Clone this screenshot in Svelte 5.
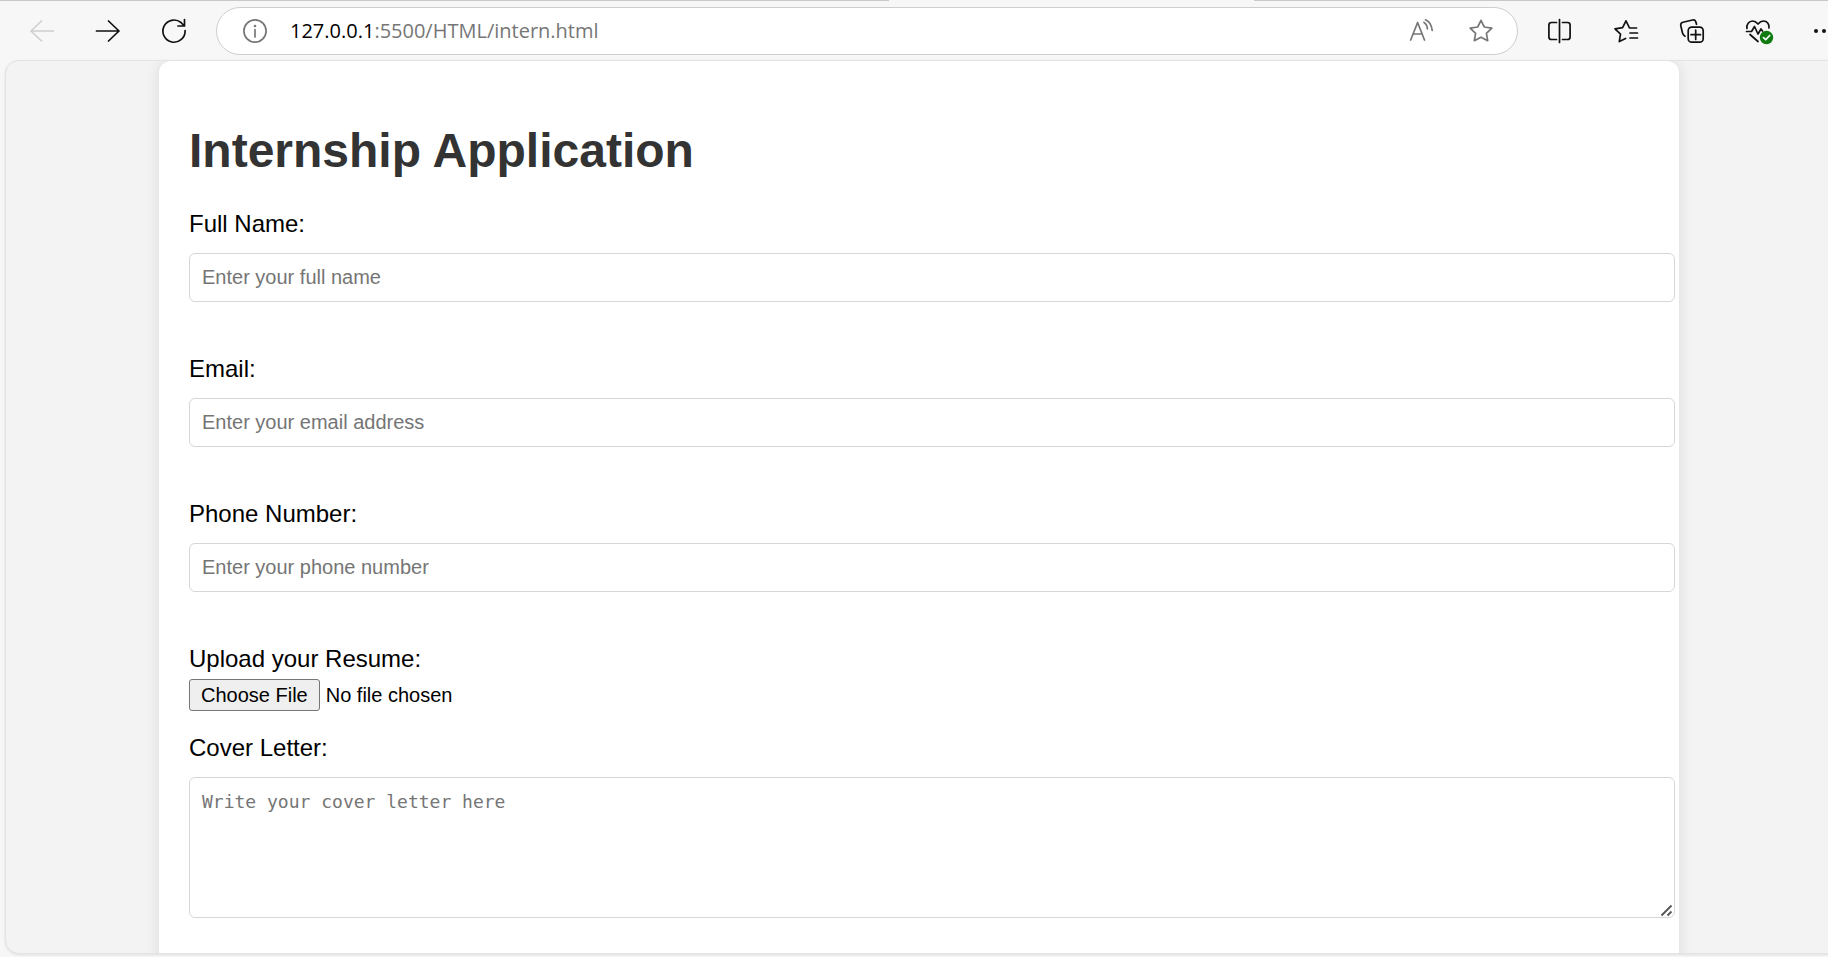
<script>
  const fields = [
    { id: 'name', type: 'text', label: 'Full Name:', hint: 'Enter your full name' },
    { id: 'email', type: 'email', label: 'Email:', hint: 'Enter your email address' },
    { id: 'phone', type: 'tel', label: 'Phone Number:', hint: 'Enter your phone number' }
  ];
</script>

<div class="browser">
  <div class="tabs"><span class="left"></span><span class="active"></span><span class="right"></span></div>
  <header class="toolbar">
    <nav class="group">
      <button class="icon faded" aria-label="Back" disabled>
        <svg viewBox="0 0 24 24"><path d="M23.5 12H1M11.5 2 1 12l10.500 10" /></svg>
      </button>
      <button class="icon" aria-label="Forward">
        <svg viewBox="0 0 24 24"><path d="M.5 12H23M12.500 2 23 12 12.500 22" /></svg>
      </button>
      <button class="icon" aria-label="Refresh">
        <svg viewBox="0 0 24 24"><path d="M23.100 11.500A11.100 11.100 0 1 1 19 3.500L22 6.700M22.500.5v6.500H16" /></svg>
      </button>
    </nav>

    <div class="address">
      <button class="icon info" aria-label="Site information">
        <svg viewBox="0 0 24 24"><circle cx="12" cy="12" r="11.100" /><path d="M12 10.500v7.500" /><circle cx="12" cy="7" r="1.300" fill="currentColor" stroke="none" /></svg>
      </button>
      <div class="url"><b>127.0.0.1</b>:5500/HTML/intern.html</div>
      <div class="tools">
        <button class="icon" aria-label="Read aloud">
          <svg viewBox="0 0 24 24"><path d="M.7 21 7.600 3.500 14.500 21M3.200 15h8.900M14 3.500c2 1.100 3.200 3.200 3.400 6.300M15.500.8c3.600 1.700 6.200 5.500 6.700 10.500" /></svg>
        </button>
        <button class="icon" aria-label="Add to favorites">
          <svg viewBox="0 0 24 24"><path d="M12 1.300 15.300 8l7.500 1.100-5.400 5.200 1.300 7.400L12 18.200l-6.700 3.500 1.300-7.400-5.400-5.200L8.700 8Z" /></svg>
        </button>
      </div>
    </div>

    <nav class="group">
      <button class="icon" aria-label="Split screen">
        <svg viewBox="0 0 24 24"><path d="M11.500.5v23M8.500 3.500H3.500Q.9 3.500.9 6v12q0 2.500 2.600 2.500h5M14.500 3.500h5q2.600 0 2.600 2.500v12q0 2.500-2.600 2.500h-5" /></svg>
      </button>
      <button class="icon" aria-label="Favorites">
        <svg viewBox="0 0 24 24"><path d="M22.500 9H15.500L12 1.800 8.600 8.700 1 9.800l5.500 5.300-1.200 7.500 6.300-3.200M16 14h7.500M16 19h7.500" /></svg>
      </button>
      <button class="icon" aria-label="Collections">
        <svg viewBox="0 0 24 24"><path d="M5 17.200Q3 16 2.500 14L.8 6.700Q.3 4 3 3.300L12.500 1q2.500-.5 3.300 1.800l.7 2.500" /><rect x="8.200" y="8.200" width="15" height="15" rx="3.500" /><path d="M15.700 11v9.500M11 15.700h9.500" /></svg>
      </button>
      <button class="icon" aria-label="Browser essentials">
        <svg viewBox="0 0 24 24"><path d="M1 9.500C.2 5.500 3 2 6.500 2c2.200 0 4 1.200 5.500 3 1.500-1.800 3.300-3 5.500-3 3.500 0 6 3 5.500 7M.5 12.500h5l3-5 3.500 7.500 3-5 1.500 2M4 15.500l8 7" /><circle cx="20.500" cy="18.500" r="6.700" fill="#107c10" stroke="none" /><path d="m17.500 18.700 2.200 2 4-4.200" stroke="#fff" /></svg>
      </button>
      <button class="icon" aria-label="More">
        <svg viewBox="0 0 24 24"><g fill="currentColor" stroke="none"><circle cx="4" cy="12" r="2" /><circle cx="12" cy="12" r="2" /><circle cx="20" cy="12" r="2" /></g></svg>
      </button>
    </nav>
  </header>

  <main class="page">
    <form class="card">
      <h1>Internship Application</h1>
      {#each fields as field (field.id)}
        <div class="field">
          <label for={field.id}>{field.label}</label>
          <input class="box" id={field.id} type={field.type} placeholder={field.hint} />
        </div>
      {/each}
      <div class="upload">
        <label for="resume">Upload your Resume:</label>
        <input id="resume" type="file" />
      </div>
      <div class="field">
        <label for="letter">Cover Letter:</label>
        <textarea class="box" id="letter" placeholder="Write your cover letter here"></textarea>
      </div>
    </form>
  </main>
</div>

<style>
  :global(body) {
    margin: 0;
  }

  * {
    box-sizing: border-box;
  }

  .browser {
    display: flex;
    flex-direction: column;
    height: 100vh;
    overflow: hidden;
    background: #f7f7f7;
    font-family: Arial, "Liberation Sans", sans-serif;
  }

  .tabs {
    display: flex;
    flex: none;
    height: 1px;
  }

  .tabs .left {
    flex: 889;
    background: #c8c8c8;
  }

  .tabs .active {
    flex: 365;
  }

  .tabs .right {
    flex: 574;
    background: #c8c8c8;
  }

  .toolbar {
    display: flex;
    flex: none;
    align-items: center;
    gap: 30px;
    height: 59px;
    padding: 1px 0 0 30px;
    margin-right: -8px;
  }

  .group {
    display: flex;
    flex: none;
    gap: 42px;
  }

  .icon {
    display: block;
    flex: none;
    width: 24px;
    height: 24px;
    padding: 0;
    border: 0;
    background: none;
    color: #111;
  }

  .icon svg {
    display: block;
    width: 24px;
    height: 24px;
    overflow: visible;
    fill: none;
    stroke: currentColor;
    stroke-width: 1.7;
    stroke-linecap: round;
    stroke-linejoin: round;
  }

  .faded {
    color: #d0d0d0;
  }

  .address {
    display: flex;
    flex: 1;
    align-items: center;
    gap: 23px;
    height: 48px;
    padding: 0 24px 0 26px;
    border: 1px solid #cecece;
    border-radius: 24px;
    background: #fff;
  }

  .address .icon {
    color: #767676;
  }

  .url {
    flex: 1;
    color: #767676;
    font: 20px/28px "Open Sans", "Noto Sans", sans-serif;
  }

  .url b {
    color: #000;
    font-weight: 400;
  }

  .tools {
    display: flex;
    gap: 35px;
  }

  .page {
    flex: 1;
    min-height: 0;
    margin: 0 -5px 3px 5px;
    overflow: hidden;
    border: 1px solid #e4e4e4;
    border-radius: 14px 0 0 14px;
    background: #f3f3f3;
    box-shadow: 0 1px 3px rgba(0, 0, 0, 0.1);
  }

  .card {
    max-width: 1520px;
    min-height: 100%;
    margin: 0 auto;
    padding: 62px 4px 35px 30px;
    border-radius: 12px 12px 0 0;
    background: #fff;
    box-shadow: 0 0 15px rgba(0, 0, 0, 0.1);
  }

  h1 {
    margin: 0 0 31px;
    color: #333;
    font-size: 48px;
    line-height: 56px;
  }

  label {
    font-size: 24px;
    line-height: 28px;
  }

  .field {
    display: flex;
    flex-direction: column;
    gap: 15px;
    margin-bottom: 53px;
  }

  .box {
    width: 100%;
    height: 49px;
    padding: 12px;
    border: 1px solid #d6d6d6;
    border-radius: 6px;
    background: #fff;
    font-family: Arial, "Liberation Sans", sans-serif;
    font-size: 20px;
  }

  .box::placeholder {
    color: #757575;
  }

  textarea.box {
    display: block;
    height: 141px;
    font-family: "DejaVu Sans Mono", monospace;
    font-size: 18px;
    line-height: 24px;
    resize: both;
  }

  textarea.box::-webkit-resizer {
    background: url("data:image/svg+xml,%3Csvg xmlns='http://www.w3.org/2000/svg' width='15' height='15'%3E%3Cpath d='M2.500 13.500 12.500 3.500M8.500 13.500l4-4' stroke='%23555' stroke-width='1.800'/%3E%3C/svg%3E") right bottom no-repeat;
  }

  .upload {
    display: flex;
    flex-direction: column;
    align-items: flex-start;
    gap: 6px;
    margin-bottom: 23px;
  }

  .upload input {
    font-family: Arial, "Liberation Sans", sans-serif;
    font-size: 20px;
    line-height: 23px;
  }

  .upload input::file-selector-button {
    height: 32px;
    margin: 0 6px 0 0;
    padding: 3px 11px;
    border: 1px solid #767676;
    border-radius: 3px;
    background: #efefef;
    color: #000;
    font: inherit;
  }
</style>
